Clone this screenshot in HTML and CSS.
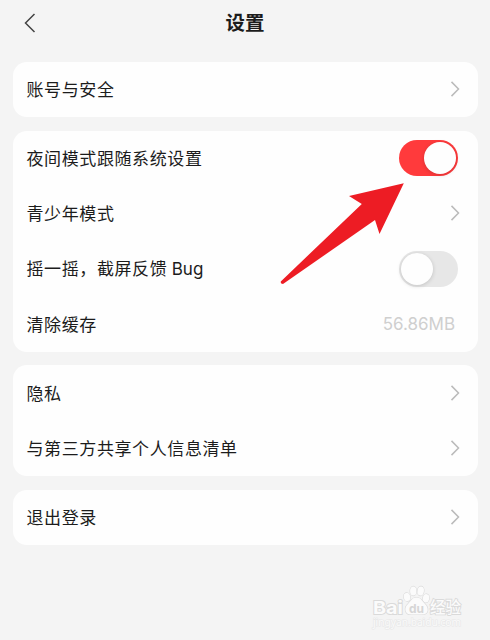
FILE: index.html
```html
<!DOCTYPE html>
<html lang="zh-CN">
<head>
  <meta charset="UTF-8">
  <meta name="viewport" content="width=device-width, initial-scale=1.0">
  <title>设置</title>
  <link rel="stylesheet" href="styles.css">
</head>
<body>
  <header class="header">
    <svg class="back" width="12" height="20" viewBox="0 0 12 20"><path d="M10.5 1 L1.5 10 L10.5 19"/></svg>
    <h1 class="title">设置</h1>
  </header>

  <main class="settings">
    <section class="card">
      <div class="row">
        <span class="label">账号与安全</span>
        <svg class="chevron" width="10" height="16" viewBox="0 0 10 16"><path d="M1.5 .9 L8.5 8 L1.5 15.1"/></svg>
      </div>
    </section>

    <section class="card">
      <div class="row">
        <span class="label">夜间模式跟随系统设置</span>
        <span class="switch switch-on"><span class="knob"></span></span>
      </div>
      <div class="row">
        <span class="label">青少年模式</span>
        <svg class="chevron" width="10" height="16" viewBox="0 0 10 16"><path d="M1.5 .9 L8.5 8 L1.5 15.1"/></svg>
      </div>
      <div class="row">
        <span class="label">摇一摇，截屏反馈 <span class="latin">Bug</span></span>
        <span class="switch"><span class="knob"></span></span>
      </div>
      <div class="row">
        <span class="label">清除缓存</span>
        <span class="value">56.86MB</span>
      </div>
    </section>

    <section class="card">
      <div class="row">
        <span class="label">隐私</span>
        <svg class="chevron" width="10" height="16" viewBox="0 0 10 16"><path d="M1.5 .9 L8.5 8 L1.5 15.1"/></svg>
      </div>
      <div class="row">
        <span class="label">与第三方共享个人信息清单</span>
        <svg class="chevron" width="10" height="16" viewBox="0 0 10 16"><path d="M1.5 .9 L8.5 8 L1.5 15.1"/></svg>
      </div>
    </section>

    <section class="card">
      <div class="row">
        <span class="label">退出登录</span>
        <svg class="chevron" width="10" height="16" viewBox="0 0 10 16"><path d="M1.5 .9 L8.5 8 L1.5 15.1"/></svg>
      </div>
    </section>
  </main>

  <svg class="arrow" width="130" height="108" viewBox="0 0 130 108">
    <path d="M123.800 3.200 L69 16 L81.800 24 L.8 101.400 Q.2 104 3 104 L95 40 L99.500 54 Z"/>
  </svg>

  <svg class="watermark" width="100" height="55" viewBox="0 0 100 55">
    <ellipse cx="37" cy="17" rx="3.200" ry="4.200" transform="rotate(-12 37 17)"/>
    <ellipse cx="43.300" cy="11" rx="3.200" ry="4.600"/>
    <ellipse cx="50.700" cy="11" rx="3.200" ry="4.600" transform="rotate(8 50.700 11)"/>
    <ellipse cx="56" cy="18.300" rx="3.200" ry="4.200" transform="rotate(12 56 18.300)"/>
    <path d="M46.500 17.500 C42 17.500 41 21 38 24 C33.500 28 35 34.500 41 34.500 L52 34.500 C59 34.500 59 28 55 24 C52 21 51 17.500 46.500 17.500 Z"/>
    <text class="mark-name" x="3" y="33.500" textLength="30" lengthAdjust="spacingAndGlyphs">Bai</text>
    <text class="mark-du" x="39" y="32.500" textLength="15" lengthAdjust="spacingAndGlyphs">du</text>
    <text class="mark-cn" x="60" y="32.500" textLength="31" lengthAdjust="spacingAndGlyphs">经验</text>
    <text class="mark-url" x="3" y="46" textLength="88" lengthAdjust="spacingAndGlyphs">jingyan.baidu.com</text>
  </svg>
</body>
</html>
```

FILE: styles.css
```css
body {
  position: relative;
  margin: 0;
  height: 640px;
  overflow: hidden;
  background-color: #f4f4f4;
  color: #1c1c1c;
  font-family: "Noto Sans CJK SC", sans-serif;
}

.header {
  display: grid;
  grid-template-columns: 36px 1fr 36px;
  align-items: center;
  height: 45px;
}

.back {
  margin-left: 24px;
  fill: none;
  stroke: #444;
  stroke-width: 1.5;
}

.title {
  margin: 0;
  padding-bottom: 2px;
  text-align: center;
  font-size: 19.5px;
  font-weight: 700;
  line-height: 28px;
}

.settings {
  display: flex;
  flex-direction: column;
  gap: 13.8px;
  padding: 16.5px 12px 0 13px;
}

.card {
  border-radius: 14px;
  background-color: #fefefe;
}

.row {
  display: flex;
  align-items: center;
  justify-content: space-between;
  height: 55.25px;
  padding: 0 20.5px 0 13.5px;
}

.label {
  font-size: 17px;
  line-height: 26px;
  letter-spacing: 0.6px;
}

.latin {
  font-family: Inter, sans-serif;
  font-size: 17px;
  letter-spacing: 0;
}

.value {
  padding-right: 2.5px;
  color: #cfcfcf;
  font-family: Inter, sans-serif;
  font-size: 17px;
}

.chevron {
  margin-right: -2px;
  fill: none;
  stroke: #bbb;
  stroke-width: 1.5;
}

.switch {
  display: flex;
  box-sizing: border-box;
  width: 59px;
  height: 36px;
  padding: 2px;
  border-radius: 18px;
  background-color: #e7e7e7;
}

.switch-on {
  justify-content: flex-end;
  background-color: #ff3a3c;
}

.knob {
  width: 32px;
  height: 32px;
  border-radius: 50%;
  background-color: #fefefe;
  box-shadow: 0 1px 4px rgba(0, 0, 0, 0.16);
}

/* pointer over the list */
.arrow {
  position: absolute;
  left: 280px;
  top: 180px;
  fill: #ed1c24;
}

.watermark {
  position: absolute;
  left: 370px;
  top: 580px;
  fill: #fbfbfb;
  stroke: #dadada;
  stroke-width: 1.2;
  paint-order: stroke;
}

.mark-name {
  font: 700 18px Inter, sans-serif;
  stroke-width: 1.8;
}

.mark-du {
  font: 700 12px Inter, sans-serif;
  fill: #d6d6d6;
  stroke: none;
}

.mark-cn {
  font: 500 16px "Noto Sans CJK SC", sans-serif;
  stroke-width: 1.8;
}

.mark-url {
  font: 10px "Noto Sans", sans-serif;
  fill: #fafafa;
  stroke: #e8e8e8;
  stroke-width: 1.2;
}
```
